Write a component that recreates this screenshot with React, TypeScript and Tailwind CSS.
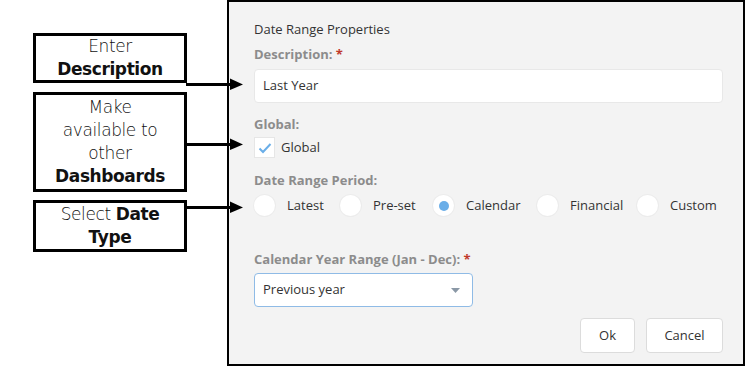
import React from "react";

const LABEL = "text-[13px] leading-[18px] font-bold text-[#8c8c8c]";

function Arrow({ top }: { top: number }) {
  return (
    <svg
      className="absolute left-[186px]"
      style={{ top: top - 6 }}
      width="60"
      height="13"
      viewBox="0 0 60 13"
    >
      <rect x="0" y="5" width="46" height="3" fill="#000" />
      <polygon points="44,0.5 57,6.5 44,12" fill="#000" />
    </svg>
  );
}

function Radio({ label, checked, width }: { label: string; checked?: boolean; width: string }) {
  return (
    <div className={`flex items-center gap-3 ${width}`}>
      <span className="flex h-[21px] w-[21px] items-center justify-center rounded-full bg-white shadow-[0_0_0_1px_#ececec]">
        {checked && <span className="h-[10px] w-[10px] rounded-full bg-[#6aaee8]" />}
      </span>
      <span className="text-[13px] text-[#333]">{label}</span>
    </div>
  );
}

export default function App() {
  return (
    <div className="relative flex h-[368px] w-[745px] bg-white" style={{ fontFamily: "'Open Sans', 'Noto Sans', sans-serif" }}>
      {/* Annotations */}
      <div
        className="flex w-[227px] shrink-0 flex-col pl-[33px] pt-[33px] text-[17px] leading-[23px] text-[#111]"
        style={{ fontFamily: "'DejaVu Sans', sans-serif", letterSpacing: "-0.4px" }}
      >
        <div className="flex h-[50px] w-[154px] flex-col items-center justify-center border-[3px] border-black">
          <span className="font-light">Enter</span>
          <span className="font-bold">Description</span>
        </div>
        <div className="mt-[9px] flex h-[100px] w-[154px] flex-col items-center justify-center border-[3px] border-black">
          <span className="font-light">Make</span>
          <span className="font-light">available to</span>
          <span className="font-light">other</span>
          <span className="font-bold">Dashboards</span>
        </div>
        <div className="mt-[8px] flex h-[52px] w-[154px] flex-col items-center justify-center border-[3px] border-black">
          <span>
            <span className="font-light">Select </span>
            <span className="font-bold">Date</span>
          </span>
          <span className="font-bold">Type</span>
        </div>
      </div>

      {/* Dialog */}
      <div className="flex h-[366px] w-[518px] flex-col border-2 border-black bg-[#f3f3f3] pl-[25px] pr-[20px] pt-[18px]">
        <div className="text-[13px] leading-[18px] text-[#333]">Date Range Properties</div>

        <div className={`mt-[7px] ${LABEL}`}>
          Description: <span className="text-[#c0392b]">*</span>
        </div>
        <div className="mt-[6px] flex h-[34px] items-center rounded-sm border border-[#e8e8e8] bg-white px-2 text-[13px] text-[#333]">
          Last Year
        </div>

        <div className={`mt-[12px] ${LABEL}`}>Global:</div>
        <div className="mt-[4px] flex h-[21px] items-center gap-[6px]">
          <span className="flex h-[21px] w-[21px] items-center justify-center border border-[#e6e6e6] bg-white">
            <svg width="14" height="12" viewBox="0 0 14 12">
              <polyline points="1.5,6.5 5,10 12.5,2" fill="none" stroke="#6aaee8" strokeWidth="2" />
            </svg>
          </span>
          <span className="text-[13px] text-[#333]">Global</span>
        </div>

        <div className={`mt-[13px] ${LABEL}`}>Date Range Period:</div>
        <div className="mt-[6px] flex h-[21px] items-center">
          <Radio label="Latest" width="w-[86px]" />
          <Radio label="Pre-set" width="w-[93px]" />
          <Radio label="Calendar" checked width="w-[104px]" />
          <Radio label="Financial" width="w-[100px]" />
          <Radio label="Custom" width="w-[86px]" />
        </div>

        <div className={`mt-[34px] ${LABEL}`}>
          Calendar Year Range (Jan - Dec): <span className="text-[#c0392b]">*</span>
        </div>
        <div className="mt-[5px] flex h-[34px] w-[219px] items-center justify-between rounded-sm border border-[#8fbbe6] bg-white pl-2 pr-[12px] text-[13px] text-[#333]">
          <span>Previous year</span>
          <svg width="9" height="5" viewBox="0 0 9 5">
            <polygon points="0,0 9,0 4.5,5" fill="#8a98a6" />
          </svg>
        </div>

        <div className="mt-[11px] flex justify-end gap-[11px]">
          <button className="h-[35px] w-[55px] rounded-sm border border-[#dcdcdc] bg-white text-[13px] text-[#333]">Ok</button>
          <button className="h-[35px] w-[77px] rounded-sm border border-[#dcdcdc] bg-white text-[13px] text-[#333]">Cancel</button>
        </div>
      </div>

      {/* Pointer arrows */}
      <Arrow top={84} />
      <Arrow top={144} />
      <Arrow top={207} />
    </div>
  );
}
